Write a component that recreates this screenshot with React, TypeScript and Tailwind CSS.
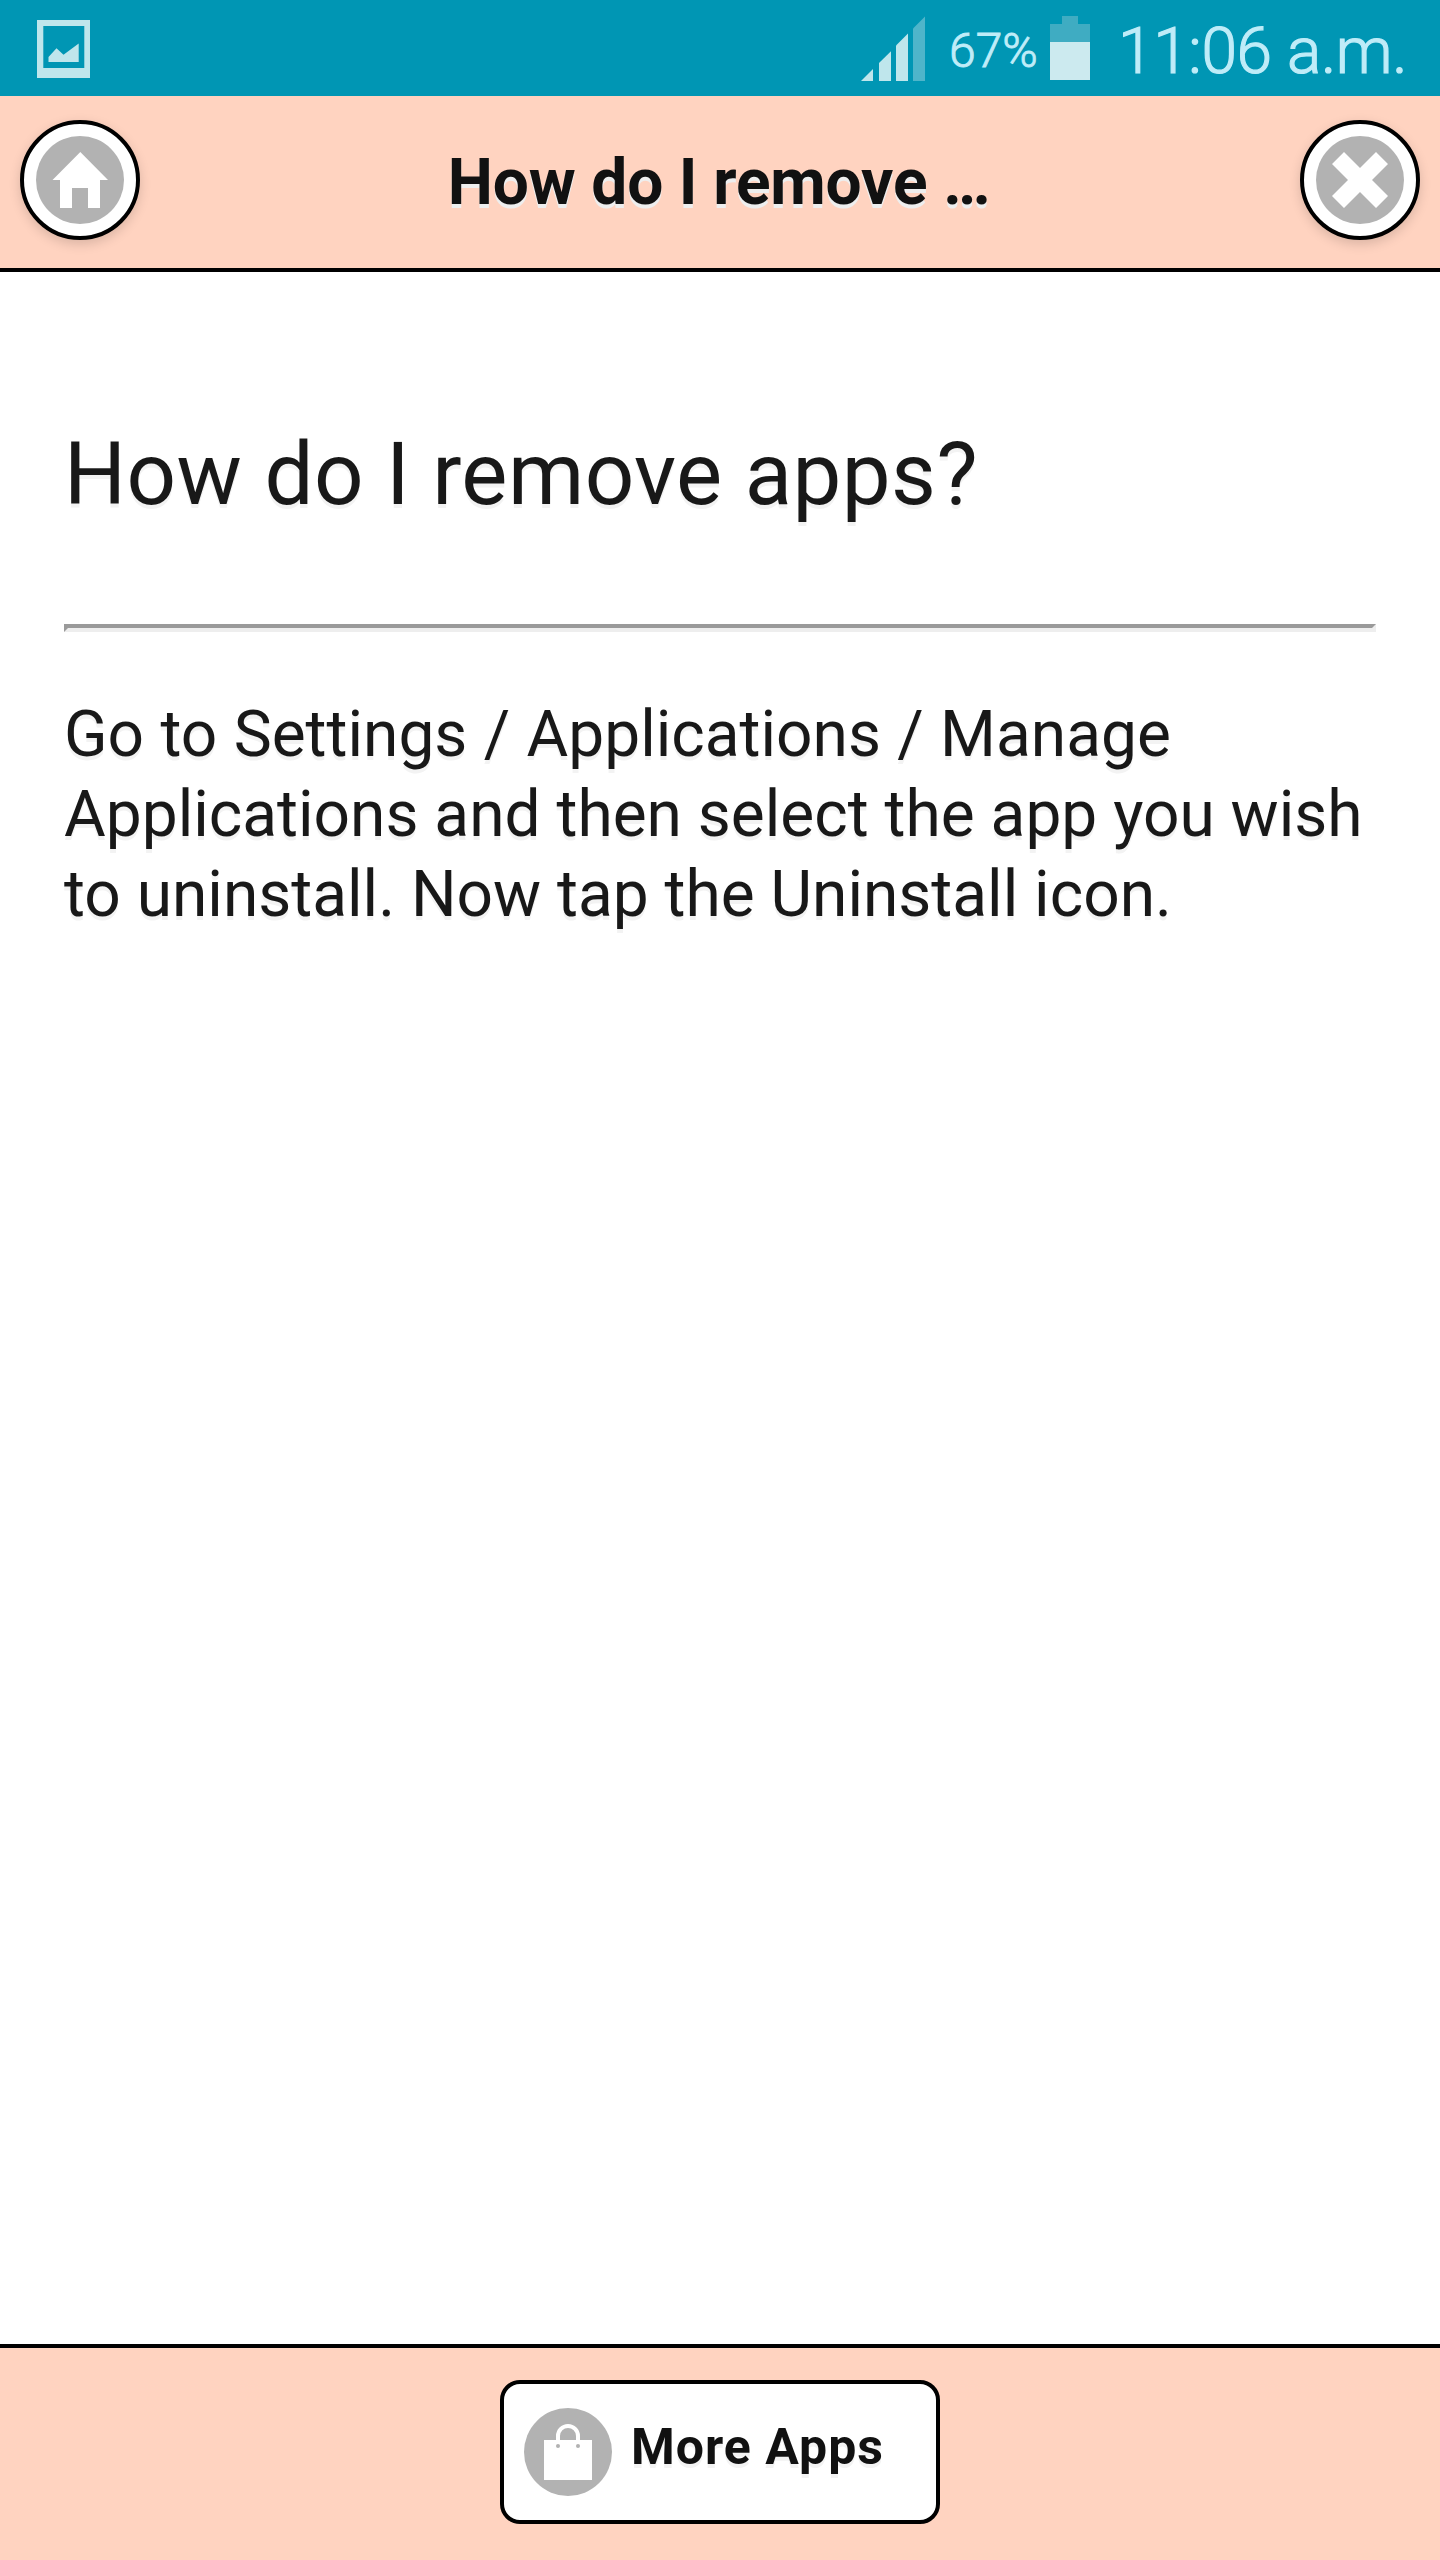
import type { ReactNode } from 'react';

function StatusBar() {
  return (
    <div className="flex h-24 items-start bg-[#0096b4] text-[#bfecf8]">
      {/* screenshot notification */}
      <svg className="mt-5 ml-[37px] h-[58px] w-[53px]" viewBox="0 0 53 58" fill="#bfe6ec">
        <path fillRule="evenodd" d="M0 0h53v58H0zM6.300 6v42h41V6z" />
        <path d="M11.500 42V37L19.500 28.300L26.500 34.700L41.700 23.500V42z" />
      </svg>

      {/* signal, last bar dimmed */}
      <svg className="mt-4 ml-[771px] h-[65px] w-[65px]" viewBox="0 0 65 65" fill="#bfe6ec">
        <path d="M0 65L12 53V65z" />
        <path d="M18 65V47L30 35.300V65z" />
        <path d="M35 65V29.500L47 17.500V65z" />
        <path d="M52 65V12.500L64 0.500V65z" fill="#4fb5ca" />
      </svg>

      <span className="mt-[21px] ml-[23px] w-[101px] text-[48px] leading-[60px] font-light [-webkit-text-stroke:0.9px_#bfecf8]">
        67%
      </span>

      <svg className="mt-4 h-16 w-10" viewBox="0 0 40 64">
        <path d="M12 0h16v8h12v18H0V8h12z" fill="#3facc2" />
        <path d="M0 26h40v38H0z" fill="#cceaef" />
      </svg>

      <span className="mt-3 ml-[28px] text-[64px] leading-[80px] font-light tracking-[-0.35px] whitespace-nowrap [-webkit-text-stroke:1.2px_#bfecf8]">
        11:06 a.m.
      </span>
    </div>
  );
}

function RoundButton({ label, children }: { label: string; children: ReactNode }) {
  return (
    <button
      aria-label={label}
      className="mt-6 flex size-[120px] items-center justify-center rounded-full border-4 border-black bg-white shadow-[0_4px_12px_rgba(0,0,0,0.15)]"
    >
      <svg className="size-[88px]" viewBox="0 0 88 88">
        <circle cx="44" cy="44" r="44" fill="#b2b2b2" />
        {children}
      </svg>
    </button>
  );
}

function Header() {
  return (
    <header className="flex h-44 items-start justify-between border-b-4 border-black bg-[#ffd3c0] px-5">
      <RoundButton label="Home">
        <path d="M44.300 16L72 44H64V72H52V52H36V72H24V44H16.500z" fill="#fff" />
      </RoundButton>
      <h1 className="mt-[47px] pr-0.5 text-[64px] leading-[80px] font-bold tracking-[-0.15px] text-[#111] [text-shadow:0_4px_0_#eee]">
        How do I remove …
      </h1>
      <RoundButton label="Close">
        <path d="M28 16L44 32L60 16L72 28L56 44L72 60L60 72L44 56L28 72L16 60L32 44L16 28z" fill="#fff" />
      </RoundButton>
    </header>
  );
}

function Footer() {
  return (
    <footer className="flex h-[216px] justify-center border-t-4 border-black bg-[#ffd3c0] pt-8">
      <button className="flex h-36 w-[440px] items-start rounded-[20px] border-4 border-black bg-white pl-5">
        <svg className="mt-6 size-[88px]" viewBox="0 0 88 88">
          <circle cx="44" cy="44" r="44" fill="#b2b2b2" />
          <path d="M20 32h48v40H20z" fill="#fff" />
          <path d="M34 34V28a10 10 0 0 1 20 0V34" fill="none" stroke="#fff" strokeWidth="4" />
          <circle cx="34" cy="38" r="2" fill="#b2b2b2" />
          <circle cx="54" cy="38" r="2" fill="#b2b2b2" />
        </svg>
        <span className="mt-[33px] ml-[19px] text-[50px] leading-[60px] font-bold tracking-[1px] text-[#111] [text-shadow:0_4px_0_#f3f3f3]">
          More Apps
        </span>
      </button>
    </footer>
  );
}

export default function App() {
  return (
    <div className="flex h-[2560px] w-[1440px] flex-col bg-white font-['Roboto',sans-serif]">
      <StatusBar />
      <Header />
      <main className="flex-1 px-16 pt-[152px] text-[#181818] [text-shadow:0_4px_0_#f3f3f3]">
        <h2 className="text-[87px] leading-[100px] tracking-[0.45px] whitespace-nowrap">How do I remove apps?</h2>
        <div className="mt-[100px] h-2 border-4 border-t-[#9a9a9a] border-r-[#eee] border-b-[#eee] border-l-[#9a9a9a]" />
        <p className="mt-[63px] text-[64px] leading-[80px] first-line:[word-spacing:0.5px]">
          Go to Settings / Applications / Manage Applications and then select the app you wish to uninstall. Now tap
          the Uninstall icon.
        </p>
      </main>
      <Footer />
    </div>
  );
}
